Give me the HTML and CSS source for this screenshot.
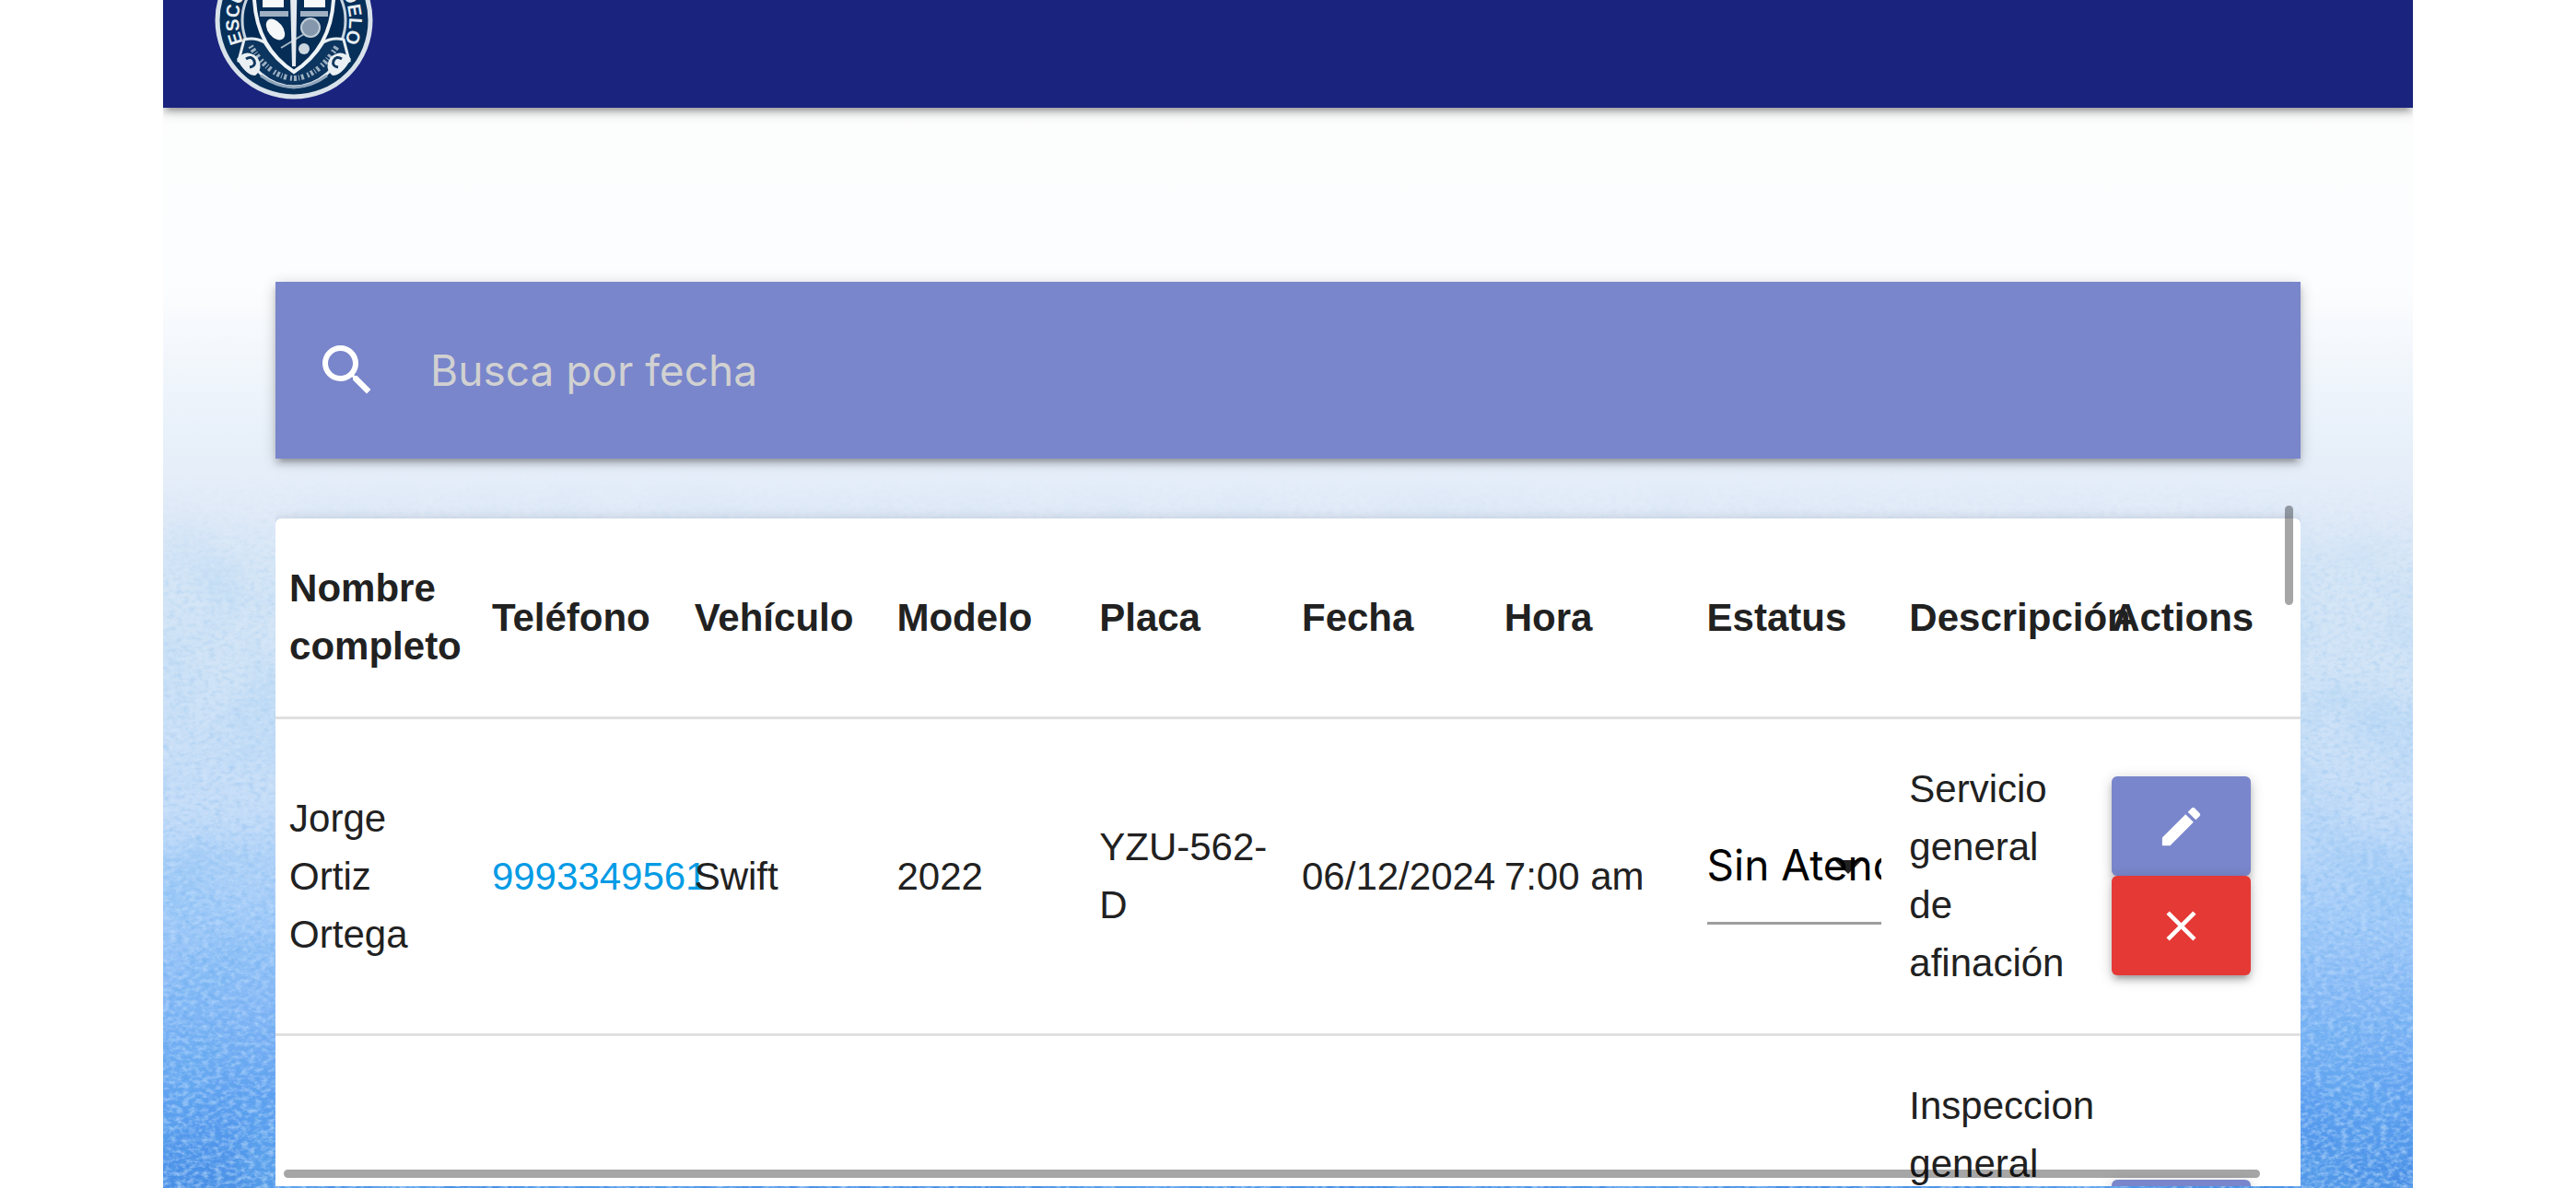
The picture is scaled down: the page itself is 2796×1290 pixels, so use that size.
FILE: index.html
```html
<!DOCTYPE html>
<html lang="es">
<head>
<meta charset="utf-8">
<title>Citas</title>
<link rel="stylesheet" href="styles.css">
</head>
<body>
<div class="app">
  <svg class="texture" aria-hidden="true">
    <defs>
      <filter id="grain" x="0" y="0" width="100%" height="100%">
        <feTurbulence type="fractalNoise" baseFrequency="0.14 0.22" numOctaves="4" seed="4"/>
        <feColorMatrix values="0 0 0 0 0.1  0 0 0 0 0.38  0 0 0 0 0.8  1.6 0 0 0 -0.65"/>
      </filter>
      <filter id="light" x="0" y="0" width="100%" height="100%">
        <feTurbulence type="fractalNoise" baseFrequency="0.14 0.22" numOctaves="4" seed="9"/>
        <feColorMatrix values="0 0 0 0 0.7  0 0 0 0 0.86  0 0 0 0 1  1.6 0 0 0 -0.65"/>
      </filter>
      <filter id="cloud" x="0" y="0" width="100%" height="100%">
        <feTurbulence type="fractalNoise" baseFrequency="0.012" numOctaves="3" seed="2"/>
        <feColorMatrix values="0 0 0 0 0.15  0 0 0 0 0.45  0 0 0 0 0.88  1.6 0 0 0 -0.68"/>
      </filter>
    </defs>
    <rect width="100%" height="100%" filter="url(#cloud)"/>
    <rect width="100%" height="100%" filter="url(#grain)"/>
    <rect width="100%" height="100%" filter="url(#light)"/>
  </svg>
  <header class="navbar">
    <svg class="logo" viewBox="0 0 172 172" role="img" aria-label="Escuela Modelo">
      <circle cx="86" cy="86" r="83" fill="#06305a" stroke="#d9e2ea" stroke-width="5"/>
      <circle cx="86" cy="86" r="56" fill="#032a54" stroke="#c6d3de" stroke-width="3"/>
      <path id="ring" d="M31 110 A60 60 0 1 1 141 110" fill="none"/>
      <text class="logo-text"><textPath href="#ring">ESCUELA</textPath></text>
      <text class="logo-text" text-anchor="end"><textPath href="#ring" startOffset="100%">MODELO</textPath></text>
      <path d="M32 107 Q44 104 54 110 Q66 130 86 142 Q106 130 118 110 Q128 104 140 107 L146 130 Q130 134 122 144 Q106 158 86 158 Q66 158 50 144 Q42 134 26 130 Z" fill="#0c355f" stroke="#e6edf2" stroke-width="3"/>
      <path d="M39 114 Q60 148 86 149 Q112 148 133 114" fill="none" stroke="#9db0c2" stroke-width="6" stroke-dasharray="2 2 3 2 1 2 3 4"/>
      <path d="M24 128 Q34 116 46 126 Q54 138 44 146 Q34 146 24 128 Z M148 128 Q138 116 126 126 Q118 138 128 146 Q138 146 148 128 Z" fill="#e9eff3"/>
      <path d="M34 128 Q40 124 43 130 Q45 136 38 137 M138 128 Q132 124 129 130 Q127 136 134 137" fill="none" stroke="#12385f" stroke-width="3"/>
      <path d="M50 146 Q66 158 86 159 Q106 158 122 146" fill="none" stroke="#8fa5ba" stroke-width="3"/>
      <path d="M43 20 H129 V64 Q126 116 86 142 Q46 116 43 64 Z" fill="#052d56" stroke="#eef3f6" stroke-width="4"/>
      <path d="M49 76 H80 V82 H49 Z M93 76 H123 V82 H93 Z" fill="#9fb0c2"/>
      <path d="M52 72 V54 H60 V64 H66 V54 H75 V72 Z M97 72 V54 H105 V64 H111 V54 H120 V72 Z" fill="#f7f9fa"/>
      <ellipse cx="66" cy="96" rx="8" ry="13" transform="rotate(-38 66 96)" fill="#f5f7f9"/>
      <circle cx="104" cy="94" r="10" fill="#8497ad" stroke="#c0ccd7" stroke-width="2"/>
      <path d="M97 101 L72 116" stroke="#a9b9c8" stroke-width="2"/>
      <circle cx="97" cy="117" r="6" fill="#cbd6df"/>
      <path d="M81 20 H90 L88 136 H84 Z" fill="#e4eaef"/>
    </svg>
  </header>
  <main class="content">
    <form class="search">
      <label class="search-label" for="search" aria-label="Buscar">
        <svg viewBox="0 0 24 24" class="search-icon"><path d="M15.5 14h-.79l-.28-.27A6.47 6.47 0 0 0 16 9.5 6.5 6.5 0 1 0 9.500 16c1.610 0 3.090-.59 4.230-1.570l.27.28v.79l5 4.990L20.490 19l-4.990-5zm-6 0C7.010 14 5 11.990 5 9.500S7.010 5 9.500 5 14 7.010 14 9.500 11.990 14 9.500 14z"/></svg>
      </label>
      <input id="search" class="search-input" type="search" placeholder="Busca por fecha">
    </form>
    <div class="scroller">
      <div class="card">
        <table class="table">
          <thead>
            <tr><th>Nombre completo</th><th>Teléfono</th><th>Vehículo</th><th>Modelo</th><th>Placa</th><th>Fecha</th><th>Hora</th><th>Estatus</th><th>Descripción</th><th>Actions</th></tr>
          </thead>
          <tbody>
            <tr>
              <td>Jorge Ortiz Ortega</td>
              <td><a class="phone" href="tel:9993349561">9993349561</a></td>
              <td>Swift</td>
              <td>2022</td>
              <td>YZU-562-D</td>
              <td>06/12/2024</td>
              <td class="nowrap">7:00 am</td>
              <td>
                <div class="select-wrap">
                  <svg class="caret" viewBox="0 0 24 24"><path d="M7 10l5 5 5-5z"/></svg>
                  <select class="select" aria-label="Estatus"><option>Sin Atender</option></select>
                </div>
              </td>
              <td>Servicio general de afinación</td>
              <td>
                <div class="actions">
                  <button class="btn edit" type="button" aria-label="Editar"><svg viewBox="0 0 24 24"><path d="M3 17.250V21h3.750L17.810 9.940l-3.750-3.750L3 17.250zM20.710 7.040a1 1 0 0 0 0-1.410l-2.340-2.340a1 1 0 0 0-1.410 0l-1.830 1.830 3.750 3.750 1.830-1.830z"/></svg></button>
                  <button class="btn remove" type="button" aria-label="Eliminar"><svg viewBox="0 0 24 24"><path d="M19 6.410L17.590 5 12 10.590 6.410 5 5 6.410 10.590 12 5 17.590 6.410 19 12 13.410 17.590 19 19 17.590 13.410 12z"/></svg></button>
                </div>
              </td>
            </tr>
            <tr class="tall">
              <td></td><td></td><td></td><td></td><td></td><td></td><td></td><td></td>
              <td class="top">Inspeccion general</td>
              <td>
                <div class="actions">
                  <button class="btn edit" type="button" aria-label="Editar"></button>
                  <button class="btn remove" type="button" aria-label="Eliminar"></button>
                </div>
              </td>
            </tr>
          </tbody>
        </table>
      </div>
      <div class="bar-y"></div>
      <div class="bar-x"></div>
    </div>
  </main>
</div>
</body>
</html>
```
FILE: styles.css
```css
* { box-sizing: border-box; }
body {
  margin: 0;
  background: #fff;
  color: #212121;
  font: 42px/63px "Liberation Sans", Arial, sans-serif;
}
.app {
  position: relative;
  display: flex;
  flex-direction: column;
  height: 100vh;
  margin: 0 177px;
  overflow: hidden;
  background: linear-gradient(#fdfdfd 0, #fcfdfe 24%, #e9f1fa 36%, #e2ebf8 43%, #d6e6f6 48%, #d2e4f6 56%, #c6ddf8 68%, #a3cbf9 77%, #80b4f6 86%, #5b9df0 93%, #468ce6 100%);
}
.texture {
  position: absolute;
  inset: 0;
  width: 100%;
  height: 100%;
  -webkit-mask-image: linear-gradient(transparent 40%, rgba(0,0,0,.25) 50%, rgba(0,0,0,.35) 70%, rgba(0,0,0,.8) 100%);
  mask-image: linear-gradient(transparent 40%, rgba(0,0,0,.25) 50%, rgba(0,0,0,.35) 70%, rgba(0,0,0,.8) 100%);
}
.navbar {
  position: relative;
  display: flex;
  align-items: flex-end;
  flex: none;
  height: 117px;
  padding: 0 56px 9px;
  background: #1a237e;
  box-shadow: 0 6px 6px rgba(0,0,0,.14), 0 9px 3px -6px rgba(0,0,0,.12), 0 3px 15px rgba(0,0,0,.2);
}
.logo { flex: none; width: 172px; height: 172px; }
.logo-text { fill: #e9eff3; font: bold 20px "Liberation Sans", Arial, sans-serif; }
.content {
  position: relative;
  display: flex;
  flex-direction: column;
  flex: 1;
  min-height: 0;
  padding: 189px 5% 2px;
}
.search {
  display: flex;
  align-items: center;
  flex: none;
  height: 192px;
  padding-left: 42px;
  background: #7986cb;
  box-shadow: 0 6px 6px rgba(0,0,0,.14), 0 9px 3px -6px rgba(0,0,0,.12), 0 3px 15px rgba(0,0,0,.2);
}
.search-label { display: flex; }
.search-icon { width: 72px; height: 72px; fill: #fff; }
.search-input {
  flex: 1;
  height: 100%;
  margin-left: 54px;
  padding: 0;
  border: 0;
  outline: 0;
  background: none;
  color: #fff;
  font: 46px Inter, "Liberation Sans", sans-serif;
}
.search-input::placeholder { color: #d1d1d1; opacity: 1; }
.scroller {
  position: relative;
  flex: 1;
  min-height: 0;
  margin-top: 43px;
  padding-top: 22px;
  overflow: hidden;
}
.card {
  border-radius: 6px;
  background: #fff;
  box-shadow: 0 6px 6px rgba(0,0,0,.14), 0 9px 3px -6px rgba(0,0,0,.12), 0 3px 15px rgba(0,0,0,.2);
}
.table { width: 100%; border-collapse: separate; border-spacing: 0; table-layout: fixed; }
th, td { padding: 44px 15px 45px; border-bottom: 3px solid #e0e0e0; text-align: left; vertical-align: middle; }
.phone { color: #039be5; text-decoration: none; }
.nowrap { white-space: nowrap; }
.tall td { height: 531px; }
.tall .top { vertical-align: top; }
.select-wrap { position: relative; padding-bottom: 28px; }
.select {
  position: relative;
  display: block;
  width: 100%;
  height: 133px;
  padding: 6px 0 0;
  appearance: none;
  border: 0;
  border-bottom: 3px solid #9e9e9e;
  border-radius: 0;
  outline: 0;
  background: none;
  color: #000;
  font: 46px Inter, "Liberation Sans", sans-serif;
}
.caret { position: absolute; top: 33px; right: 0; width: 72px; height: 72px; fill: #212121; }
.actions { display: flex; flex-direction: column; align-items: flex-start; }
.btn {
  display: flex;
  align-items: center;
  justify-content: center;
  width: 151px;
  height: 108px;
  padding: 0;
  border: 0;
  border-radius: 6px;
  box-shadow: 0 6px 6px rgba(0,0,0,.14), 0 9px 3px -6px rgba(0,0,0,.12), 0 3px 15px rgba(0,0,0,.2);
}
.btn svg { width: 55px; height: 55px; fill: #fff; }
.edit { background: #7986cb; }
.remove { background: #e53935; }
.bar-y, .bar-x { position: absolute; border-radius: 5px; background: rgba(0,0,0,.35); }
.bar-y { top: 8px; right: 8px; width: 9px; height: 108px; }
.bar-x { bottom: 9px; left: 9px; right: 44px; height: 9px; }
```
